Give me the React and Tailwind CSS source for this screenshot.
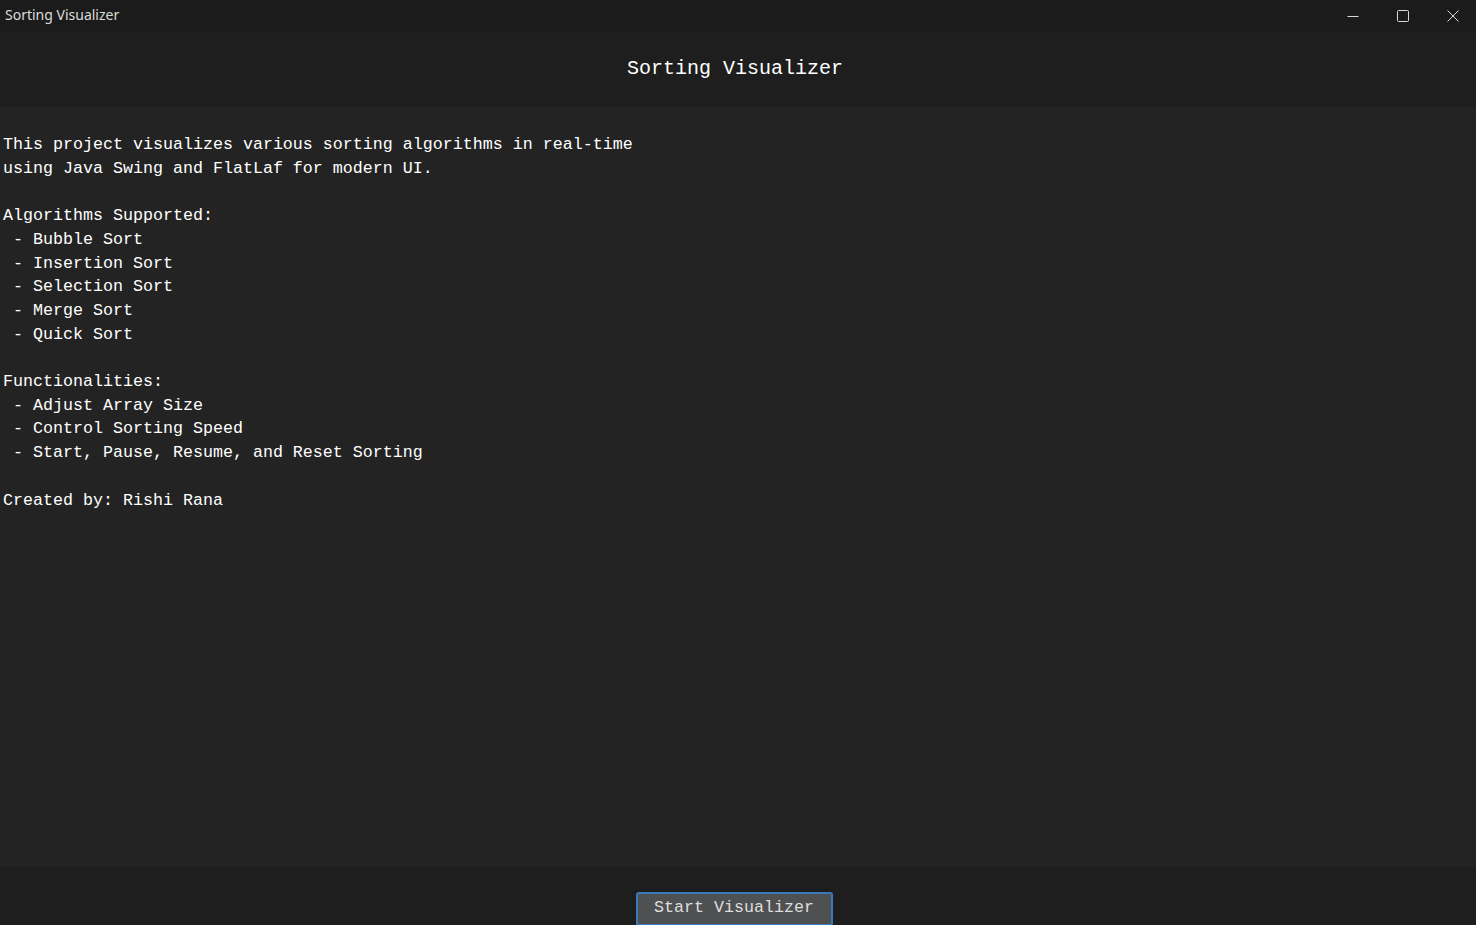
export default function App() {
  const lines = [
    'This project visualizes various sorting algorithms in real-time',
    'using Java Swing and FlatLaf for modern UI.',
    '',
    'Algorithms Supported:',
    ' - Bubble Sort',
    ' - Insertion Sort',
    ' - Selection Sort',
    ' - Merge Sort',
    ' - Quick Sort',
    '',
    'Functionalities:',
    ' - Adjust Array Size',
    ' - Control Sorting Speed',
    ' - Start, Pause, Resume, and Reset Sorting',
    '',
    'Created by: Rishi Rana',
  ]

  return (
    <div className="w-[1476px] h-[925px] flex flex-col bg-[#232323] overflow-hidden">
      {/* window title bar */}
      <div className="h-[32px] bg-[#1b1b1b] flex items-center justify-between shrink-0">
        <span className="pl-[5px] text-[14px] text-[#dcdcdc] font-['Noto_Sans',sans-serif] leading-none -mt-[3px]">
          Sorting Visualizer
        </span>
        <div className="flex h-full mr-[-2px]">
          <div className="w-[50px] flex items-center justify-center">
            <svg width="12" height="12" viewBox="0 0 12 12"><path d="M0.5 6.5h11" stroke="#d8d8d8" strokeWidth="1" /></svg>
          </div>
          <div className="w-[50px] flex items-center justify-center">
            <svg width="12" height="12" viewBox="0 0 12 12"><rect x="0.5" y="0.5" width="11" height="11" rx="1" fill="none" stroke="#d8d8d8" strokeWidth="1" /></svg>
          </div>
          <div className="w-[50px] flex items-center justify-center">
            <svg width="12" height="12" viewBox="0 0 12 12"><path d="M0.5 0.5l11 11M11.5 0.5l-11 11" stroke="#d8d8d8" strokeWidth="1" /></svg>
          </div>
        </div>
      </div>

      {/* header */}
      <div className="h-[75px] bg-[#1e1e1e] flex items-center justify-center shrink-0">
        <h1 className="text-[20px] text-white font-['Liberation_Mono',monospace] -mt-[2px] mr-[6px]">Sorting Visualizer</h1>
      </div>

      {/* description */}
      <div className="flex-1 pl-[3px] pt-[26px]">
        <pre className="text-[16.67px] leading-[23.7px] text-white font-['Liberation_Mono',monospace]">
          {lines.join('\n')}
        </pre>
      </div>

      {/* footer */}
      <div className="h-[58px] bg-[#1e1e1e] flex justify-center items-start pt-[25px] shrink-0">
        <button className="w-[197px] h-[34px] mr-[8px] bg-[#4e5052] border-2 border-[#3c78b8] rounded-[3px] text-[16.67px] text-[#dedede] font-['Liberation_Mono',monospace] leading-none pb-[2px]">
          Start Visualizer
        </button>
      </div>
    </div>
  )
}
